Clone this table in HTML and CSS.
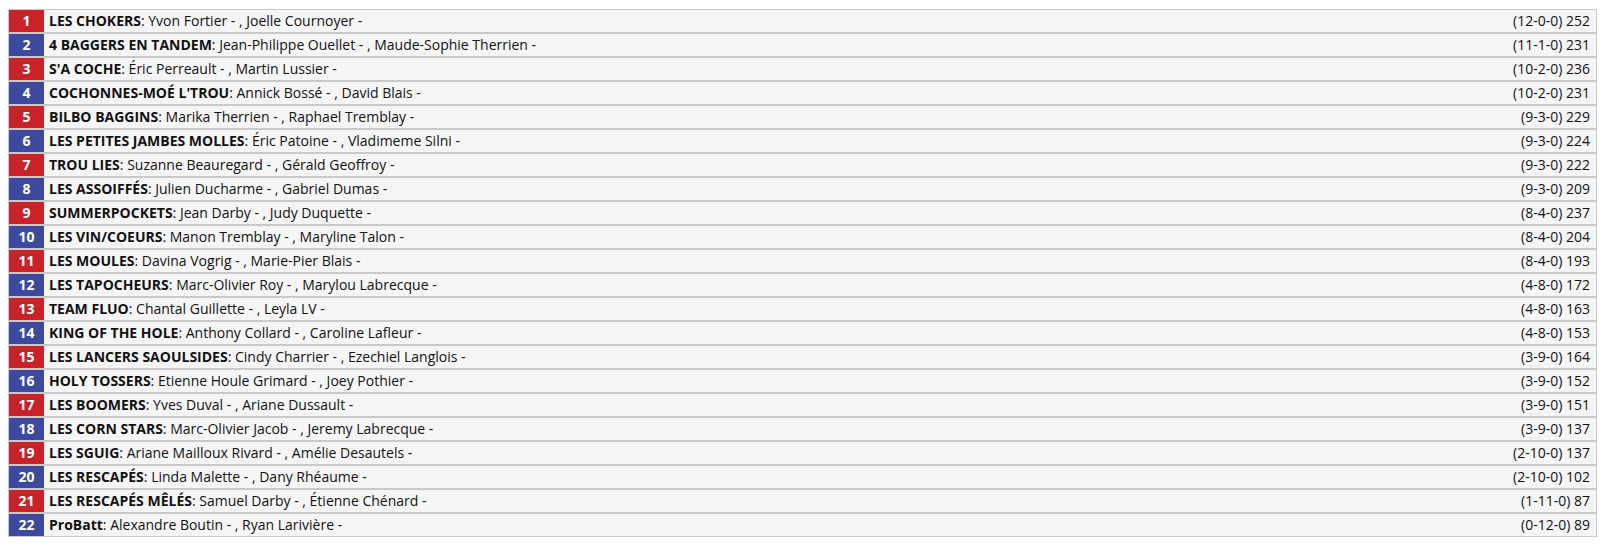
FILE: index.html
```html
<!DOCTYPE html>
<html lang="fr">
<head>
<meta charset="utf-8">
<title>Classement</title>
<link rel="stylesheet" href="styles.css">
</head>
<body>
<ul class="standings">
  <li class="row"><span class="rank red">1</span><span class="team"><b>LES CHOKERS</b>: Yvon Fortier - , Joelle Cournoyer -</span><span class="record">(12-0-0) 252</span></li>
  <li class="row"><span class="rank blue">2</span><span class="team"><b>4 BAGGERS EN TANDEM</b>: Jean-Philippe Ouellet - , Maude-Sophie Therrien -</span><span class="record">(11-1-0) 231</span></li>
  <li class="row"><span class="rank red">3</span><span class="team"><b>S'A COCHE</b>: Éric Perreault - , Martin Lussier -</span><span class="record">(10-2-0) 236</span></li>
  <li class="row"><span class="rank blue">4</span><span class="team"><b>COCHONNES-MOÉ L'TROU</b>: Annick Bossé - , David Blais -</span><span class="record">(10-2-0) 231</span></li>
  <li class="row"><span class="rank red">5</span><span class="team"><b>BILBO BAGGINS</b>: Marika Therrien - , Raphael Tremblay -</span><span class="record">(9-3-0) 229</span></li>
  <li class="row"><span class="rank blue">6</span><span class="team"><b>LES PETITES JAMBES MOLLES</b>: Éric Patoine - , Vladimeme Silni -</span><span class="record">(9-3-0) 224</span></li>
  <li class="row"><span class="rank red">7</span><span class="team"><b>TROU LIES</b>: Suzanne Beauregard - , Gérald Geoffroy -</span><span class="record">(9-3-0) 222</span></li>
  <li class="row"><span class="rank blue">8</span><span class="team"><b>LES ASSOIFFÉS</b>: Julien Ducharme - , Gabriel Dumas -</span><span class="record">(9-3-0) 209</span></li>
  <li class="row"><span class="rank red">9</span><span class="team"><b>SUMMERPOCKETS</b>: Jean Darby - , Judy Duquette -</span><span class="record">(8-4-0) 237</span></li>
  <li class="row"><span class="rank blue">10</span><span class="team"><b>LES VIN/COEURS</b>: Manon Tremblay - , Maryline Talon -</span><span class="record">(8-4-0) 204</span></li>
  <li class="row"><span class="rank red">11</span><span class="team"><b>LES MOULES</b>: Davina Vogrig - , Marie-Pier Blais -</span><span class="record">(8-4-0) 193</span></li>
  <li class="row"><span class="rank blue">12</span><span class="team"><b>LES TAPOCHEURS</b>: Marc-Olivier Roy - , Marylou Labrecque -</span><span class="record">(4-8-0) 172</span></li>
  <li class="row"><span class="rank red">13</span><span class="team"><b>TEAM FLUO</b>: Chantal Guillette - , Leyla LV -</span><span class="record">(4-8-0) 163</span></li>
  <li class="row"><span class="rank blue">14</span><span class="team"><b>KING OF THE HOLE</b>: Anthony Collard - , Caroline Lafleur -</span><span class="record">(4-8-0) 153</span></li>
  <li class="row"><span class="rank red">15</span><span class="team"><b>LES LANCERS SAOULSIDES</b>: Cindy Charrier - , Ezechiel Langlois -</span><span class="record">(3-9-0) 164</span></li>
  <li class="row"><span class="rank blue">16</span><span class="team"><b>HOLY TOSSERS</b>: Etienne Houle Grimard - , Joey Pothier -</span><span class="record">(3-9-0) 152</span></li>
  <li class="row"><span class="rank red">17</span><span class="team"><b>LES BOOMERS</b>: Yves Duval - , Ariane Dussault -</span><span class="record">(3-9-0) 151</span></li>
  <li class="row"><span class="rank blue">18</span><span class="team"><b>LES CORN STARS</b>: Marc-Olivier Jacob - , Jeremy Labrecque -</span><span class="record">(3-9-0) 137</span></li>
  <li class="row"><span class="rank red">19</span><span class="team"><b>LES SGUIG</b>: Ariane Mailloux Rivard - , Amélie Desautels -</span><span class="record">(2-10-0) 137</span></li>
  <li class="row"><span class="rank blue">20</span><span class="team"><b>LES RESCAPÉS</b>: Linda Malette - , Dany Rhéaume -</span><span class="record">(2-10-0) 102</span></li>
  <li class="row"><span class="rank red">21</span><span class="team"><b>LES RESCAPÉS MÊLÉS</b>: Samuel Darby - , Étienne Chénard -</span><span class="record">(1-11-0) 87</span></li>
  <li class="row"><span class="rank blue">22</span><span class="team"><b>ProBatt</b>: Alexandre Boutin - , Ryan Larivière -</span><span class="record">(0-12-0) 89</span></li>
</ul>
</body>
</html>
```
FILE: styles.css
```css
html, body {
  margin: 0;
  padding: 0;
  background: #ffffff;
}
body {
  padding: 9px 0 0 8px;
  font-family: "Open Sans", "Liberation Sans", sans-serif;
  font-size: 14px;
  color: #111;
}
.standings {
  list-style: none;
  margin: 0;
  padding: 0;
  width: 1589px;
}
.row {
  display: flex;
  align-items: stretch;
  height: 24px;
  box-sizing: border-box;
  border: 1px solid #c9c9c9;
  background: #f5f5f5;
  line-height: 22px;
}
.rank {
  width: 35px;
  flex: none;
  text-align: center;
  color: #fff;
  font-weight: 700;
}
.red { background: #c9222b; }
.blue { background: #3b4a9c; }
.team {
  padding-left: 5px;
  white-space: nowrap;
}
.team b { font-weight: 700; }
.record {
  margin-left: auto;
  padding-right: 6px;
  white-space: nowrap;
}
```
